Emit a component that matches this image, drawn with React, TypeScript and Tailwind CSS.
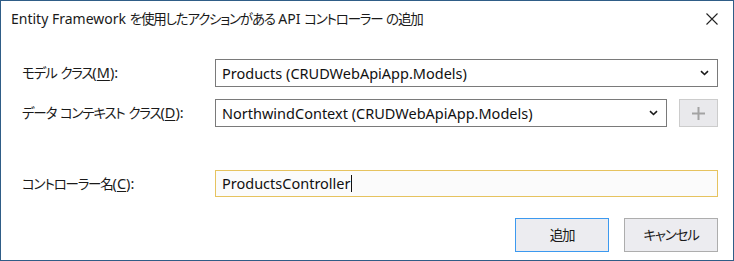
import React from 'react'

const font = { fontFamily: '"Noto Sans", "Noto Sans CJK JP", sans-serif' }

// Japanese runs: a little smaller and tighter so kana come out as narrow as the original UI font
function J({ children }: { children: React.ReactNode }) {
  return <span className="text-[13.5px] tracking-[-1.2px]">{children}</span>
}

function Chevron() {
  return (
    <svg width="9" height="6" viewBox="0 0 9 6" className="shrink-0">
      <path d="M1 1.2 L4.5 4.5 L8 1.2" fill="none" stroke="#1a1a1a" strokeWidth="1.6" />
    </svg>
  )
}

function Combo({ text, width }: { text: string; width: string }) {
  return (
    <div className={`${width} h-[28px] flex items-center justify-between border border-[#7a7a7a] bg-white pl-[6px] pr-[8px]`}>
      <span className="text-[14.5px] text-[#111] leading-none">{text}</span>
      <Chevron />
    </div>
  )
}

export default function App() {
  return (
    <div
      className="w-[734px] h-[261px] border border-[#2f5d87] bg-white flex flex-col text-[#1a1a1a] [font-feature-settings:'palt'] whitespace-nowrap"
      style={font}
    >
      {/* Title bar */}
      <div className="h-[36px] flex items-center justify-between pl-[10px] pr-[15px]">
        <span className="text-[14px] leading-none">
          Entity Framework <J>を使用したアクションがある</J> API <J>コントローラー</J> <J>の追加</J>
        </span>
        <svg width="12" height="12" viewBox="0 0 12 12">
          <path d="M0.5 0.5 L11.5 11.5 M11.5 0.5 L0.5 11.5" stroke="#222" strokeWidth="1.1" />
        </svg>
      </div>

      <div className="flex flex-col pl-[21px] pr-[15px] pt-[22px]">
        <div className="flex items-center">
          <span className="w-[193px] text-[14.5px] leading-none">
            <J>モデル</J> <J>クラス</J>(<span className="underline underline-offset-2">M</span>):
          </span>
          <Combo text="Products (CRUDWebApiApp.Models)" width="w-[503px]" />
        </div>

        <div className="flex items-center mt-[12px]">
          <span className="w-[193px] text-[14.5px] leading-none">
            <J>データ</J> <J>コンテキスト</J> <J>クラス</J>(<span className="underline underline-offset-2">D</span>):
          </span>
          <Combo text="NorthwindContext (CRUDWebApiApp.Models)" width="w-[452px]" />
          <div className="ml-[12px] w-[39px] h-[28px] border border-[#cccccc] bg-[#e9e9ec] flex items-center justify-center">
            <svg width="13" height="13" viewBox="0 0 13 13">
              <path d="M6.5 0 V13 M0 6.5 H13" stroke="#a3a3a3" strokeWidth="2" />
            </svg>
          </div>
        </div>

        <div className="flex items-center mt-[43px]">
          <span className="w-[193px] text-[14.5px] leading-none">
            <J>コントローラー名</J>(<span className="underline underline-offset-2">C</span>):
          </span>
          <div className="w-[503px] h-[27px] border border-[#e6c35f] bg-[#fbfbfb] flex items-center pl-[6px]">
            <span className="text-[14.5px] text-[#111] leading-none">ProductsController</span>
            <span className="w-px h-[17px] bg-[#111]" />
          </div>
        </div>

        <div className="flex justify-end gap-[15px] mt-[21px]">
          <button className="w-[94px] h-[34px] border border-[#3c99ef] bg-[#ececf0] text-[14.5px] leading-none"><J>追加</J></button>
          <button className="w-[94px] h-[34px] border border-[#adadad] bg-[#ececf0] text-[14.5px] leading-none"><J>キャンセル</J></button>
        </div>
      </div>
    </div>
  )
}
